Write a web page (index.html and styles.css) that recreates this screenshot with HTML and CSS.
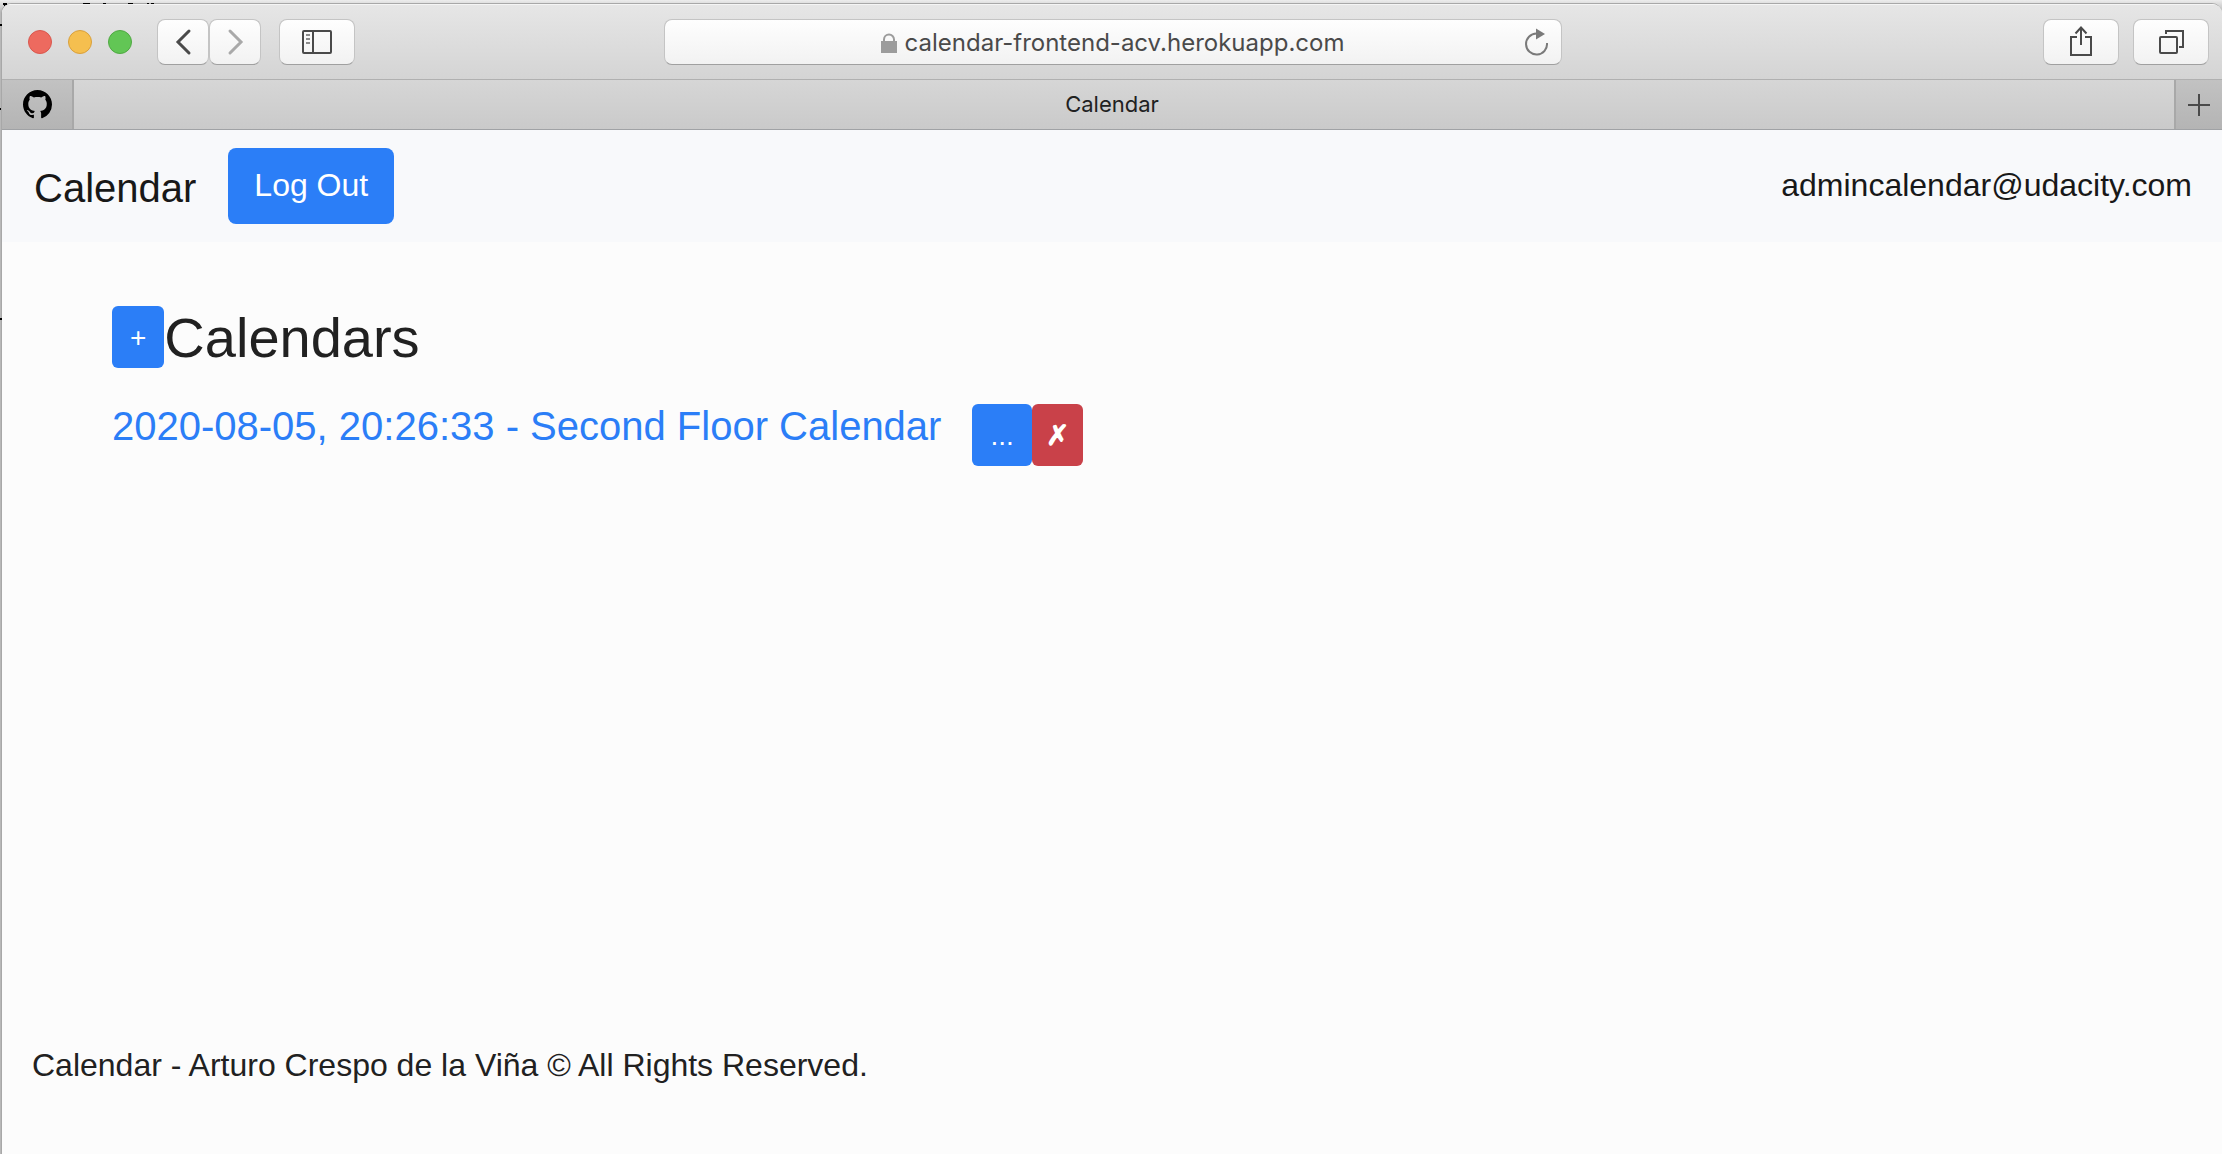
FILE: index.html
```html
<!DOCTYPE html>
<html lang="en">
<head>
<meta charset="utf-8">
<title>Calendar</title>
<link rel="stylesheet" href="styles.css">
</head>
<body>
<div class="desktop">
  <svg class="behind" width="160" height="330" viewBox="0 0 160 330" aria-hidden="true">
    <path d="M3 3h4v2h-2v1h-1v-1h-1zM83 3h7v1h-7zM103 3h3v1h-3zM128 3h5v1h-5zM147 3h2v1h-2zM151 3h3v1h-3zM0 24h2v2h-2zM0 108h1v2h-1zM0 318h2v2h-2z"/>
  </svg>
  <div class="window">
    <header class="toolbar">
      <div class="tools">
        <div class="lights">
          <span class="light close"></span><span class="light minimise"></span><span class="light expand"></span>
        </div>
        <div class="history">
          <button class="tool narrow" aria-label="Back"><svg width="24" height="30" viewBox="0 0 24 30"><path d="M18 4L7 15L18 26" class="thick"/></svg></button>
          <button class="tool narrow faded" aria-label="Forward"><svg width="24" height="30" viewBox="0 0 24 30"><path d="M7 4L18 15L7 26" class="thick"/></svg></button>
        </div>
        <button class="tool" aria-label="Show sidebar"><svg width="32" height="26" viewBox="0 0 32 26"><rect x="2" y="2" width="28" height="22" rx="1"/><path d="M12 2v22"/><path d="M5 6h4M5 10h4M5 14h4" class="faint"/></svg></button>
      </div>
      <div class="address">
        <svg width="16" height="20" viewBox="0 0 16 20" class="lock"><path d="M3 9V6.500a5 5 0 0 1 10 0V9"/><rect x="0" y="8" width="16" height="12"/></svg>
        <span>calendar-frontend-acv.herokuapp.com</span>
        <button class="reload" aria-label="Reload"><svg width="24" height="28" viewBox="0 0 24 28"><path d="M22 15A10.500 10.500 0 1 1 11.500 5.500H13"/><path d="M11 0.500L20 6L11 11.500z" class="solid"/></svg></button>
      </div>
      <div class="tools actions">
        <button class="tool" aria-label="Share"><svg width="24" height="32" viewBox="0 0 24 32"><path d="M8 11H2V29H22V11H16M12 19V2M6.500 7.500L12 1.500L17.500 7.500"/></svg></button>
        <button class="tool" aria-label="Show all tabs"><svg width="26" height="26" viewBox="0 0 26 26"><rect x="2" y="8" width="17" height="16" rx="1"/><path d="M8 5V2H25V18H21"/></svg></button>
      </div>
    </header>
    <nav class="tabs" aria-label="Tabs">
      <a class="pinned" href="#" aria-label="GitHub"><svg width="29" height="29" viewBox="0 0 16 16"><path class="solid" d="M8 0C3.580 0 0 3.580 0 8c0 3.540 2.290 6.530 5.470 7.590.4.070.55-.17.55-.38 0-.19-.01-.82-.01-1.490-2.010.37-2.530-.49-2.690-.94-.09-.23-.48-.94-.82-1.130-.28-.15-.68-.52-.01-.53.63-.01 1.080.58 1.230.82.72 1.210 1.870.87 2.330.66.07-.52.28-.87.51-1.070-1.780-.2-3.640-.89-3.640-3.950 0-.87.31-1.590.82-2.150-.08-.2-.36-1.020.08-2.120 0 0 .67-.21 2.200.82.64-.18 1.320-.27 2-.27s1.360.09 2 .27c1.530-1.040 2.200-.82 2.200-.82.44 1.100.16 1.920.08 2.120.51.56.82 1.270.82 2.150 0 3.070-1.870 3.750-3.650 3.950.29.25.54.73.54 1.480 0 1.070-.01 1.930-.01 2.200 0 .21.15.46.55.38A8.010 8.010 0 0 0 16 8c0-4.420-3.580-8-8-8z"/></svg></a>
      <a class="tab" href="#">Calendar</a>
      <button class="new-tab" aria-label="New tab"><svg width="22" height="22" viewBox="0 0 22 22"><path d="M0 11H22M11 0V22"/></svg></button>
    </nav>
    <div class="page">
      <nav class="navbar">
        <a class="brand" href="#">Calendar</a>
        <button class="btn primary">Log Out</button>
        <span class="user">admincalendar@udacity.com</span>
      </nav>
      <main class="content">
        <div class="heading">
          <button class="btn small primary" aria-label="Add calendar">+</button>
          <h1>Calendars</h1>
        </div>
        <div class="entry">
          <a href="#">2020-08-05, 20:26:33 - Second Floor Calendar</a>
          <div class="entry-actions">
            <button class="btn small primary" aria-label="Edit">...</button>
            <button class="btn small danger" aria-label="Delete">✗</button>
          </div>
        </div>
      </main>
      <footer class="footer">Calendar - Arturo Crespo de la Viña © All Rights Reserved.</footer>
    </div>
  </div>
</div>
</body>
</html>
```
FILE: styles.css
```css
* { box-sizing: border-box; }

body {
  margin: 0;
  font-family: "Liberation Sans", Arial, sans-serif;
  font-size: 32px;
  line-height: 48px;
  color: #212121;
}

button { font: inherit; border: 0; padding: 0; }
a { color: inherit; text-decoration: none; }
svg { display: block; fill: none; stroke: currentColor; stroke-width: 2; }
.solid { fill: currentColor; stroke: none; }

.desktop {
  position: relative;
  min-height: 100vh;
  padding: 3px 0 0 1px;
  background: linear-gradient(#ededed, #b8b8b8 12px);
  display: flex;
}

.behind { position: absolute; left: 0; top: 0; z-index: 1; fill: #000; stroke: none; }

.window {
  position: relative;
  flex: 1;
  display: flex;
  flex-direction: column;
  border: 1px solid #a8a8a8;
  border-width: 1px 0 0 1px;
  border-radius: 10px 10px 0 0;
  background: #fcfcfc;
  overflow: hidden;
}

.toolbar {
  display: grid;
  grid-template-columns: 1fr 898px 1fr;
  align-items: center;
  height: 76px;
  padding: 0 13px 0 14px;
  border-top: 1px solid #f5f5f5;
  border-bottom: 1px solid #b0b0b0;
  background: linear-gradient(#e6e6e6, #d4d4d4);
  color: #4a4a4a;
}

.tools { display: flex; align-items: center; gap: 18px; }
.actions { justify-content: flex-end; gap: 14px; }
.lights { display: flex; gap: 16px; margin: 0 7px 0 12px; }
.light { width: 24px; height: 24px; border-radius: 50%; border: 1px solid; }
.close { background: #ed6a5f; border-color: #d9574e; }
.minimise { background: #f5bf4f; border-color: #d9a03c; }
.expand { background: #62c655; border-color: #50a943; }
.history { display: flex; }

.tool, .address {
  height: 46px;
  border: 1px solid #c4c4c4;
  border-bottom-color: #a0a0a0;
  border-radius: 8px;
  background: linear-gradient(#fefefe, #f2f2f2);
}

.tool {
  display: flex;
  align-items: center;
  justify-content: center;
  width: 76px;
  color: #4a4a4a;
}

.narrow { width: 52px; }
.faded { color: #a9a9a9; }
.thick { stroke-width: 3; stroke-linecap: round; }
.faint { stroke: #8c8c8c; }

.address {
  position: relative;
  display: flex;
  align-items: center;
  justify-content: center;
  gap: 8px;
  padding-top: 2px;
  font-family: Inter, sans-serif;
  font-size: 24px;
}

.lock { color: #9c9c9c; }
.lock rect { fill: currentColor; stroke: none; }
.reload { position: absolute; right: 12px; top: 8px; background: none; color: #7a7a7a; }

.tabs {
  display: flex;
  height: 50px;
  border-bottom: 1px solid #a0a2a5;
  background: linear-gradient(#d6d6d6, #cacaca);
  font-family: Inter, sans-serif;
  font-size: 22px;
}

.pinned, .new-tab {
  display: flex;
  align-items: center;
  justify-content: center;
  background: linear-gradient(#c2c2c2, #b4b4b4);
}

.pinned { width: 72px; border-right: 2px solid #a8a8a8; color: #000; }
.new-tab { width: 48px; border-left: 2px solid #a8a8a8; color: #4a4a4a; }
.tab { flex: 1; padding-right: 24px; text-align: center; }

.page { flex: 1; display: flex; flex-direction: column; }

.navbar {
  display: flex;
  align-items: center;
  gap: 32px;
  padding: 16px 30px 16px 32px;
  background: #f8f9fb;
  color: #181818;
}

.brand { font-size: 40px; line-height: 60px; padding: 12px 0 8px; }
.user { margin-left: auto; padding-bottom: 2px; }

.btn { padding: 13px 26px 15px; border-radius: 8px; color: #fff; }
.small { padding: 11px 18px 9px; border-radius: 6px; font-size: 28px; line-height: 42px; }
.primary { background: #2b7ef7; }
.danger { padding-left: 14px; padding-right: 14px; background: #c94149; font-weight: 700; }

.content { flex: 1; padding: 60px 110px; }
.heading { display: flex; align-items: center; }
h1 { margin: 0; padding-top: 2px; font-size: 56px; line-height: 68px; font-weight: 400; }

.entry { display: flex; gap: 31px; margin-top: 30px; font-size: 40px; color: #2b7ef7; }
.entry-actions { display: flex; padding-top: 2px; }

.footer { padding: 0 30px 65px; }
```
